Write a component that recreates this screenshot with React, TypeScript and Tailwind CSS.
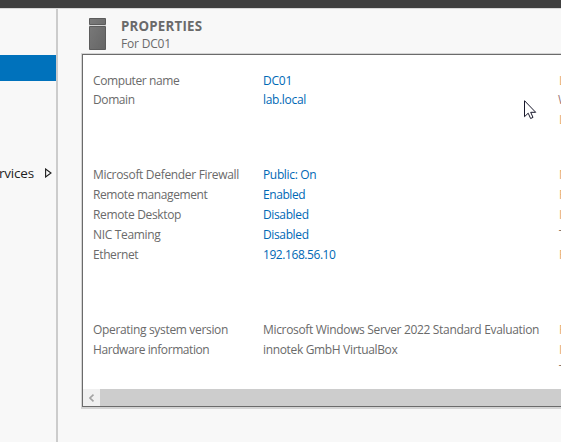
type Row = {
  label: string;
  value: string;
  labelFit: string;
  valueFit: string;
  plain?: boolean;
  more: string;
  moreFit?: string;
};

const identity: Row[] = [
  { label: 'Computer name', value: 'DC01', labelFit: 'tracking-[-0.4px]', valueFit: 'tracking-[-0.2px]', more: 'Last installed updates' },
  { label: 'Domain', value: 'lab.local', labelFit: 'tracking-[-0.4px]', valueFit: 'tracking-[-0.33px]', more: 'Windows Update', moreFit: '-ml-px text-[#9a7a80]' },
  { label: '', value: '', labelFit: '', valueFit: '', more: 'Last checked for updates' },
];

const network: Row[] = [
  { label: 'Microsoft Defender Firewall', value: 'Public: On', labelFit: 'tracking-[-0.32px]', valueFit: 'tracking-[-0.35px]', more: 'Microsoft Defender Antivirus' },
  { label: 'Remote management', value: 'Enabled', labelFit: 'tracking-[-0.4px]', valueFit: 'tracking-[-0.42px]', more: 'Feedback & Diagnostics' },
  { label: 'Remote Desktop', value: 'Disabled', labelFit: 'tracking-[-0.35px]', valueFit: 'tracking-[-0.37px]', more: 'IE Enhanced Security Configuration' },
  { label: 'NIC Teaming', value: 'Disabled', labelFit: 'tracking-[-0.33px]', valueFit: 'tracking-[-0.37px]', more: 'Time zone', moreFit: 'text-[#8c7666]' },
  { label: 'Ethernet', value: '192.168.56.10', labelFit: 'tracking-[-0.4px]', valueFit: 'tracking-[-0.43px]', more: 'Product ID' },
];

const system: Row[] = [
  { label: 'Operating system version', value: 'Microsoft Windows Server 2022 Standard Evaluation', labelFit: 'tracking-[-0.33px]', valueFit: 'tracking-[-0.33px]', plain: true, more: 'Processors' },
  { label: 'Hardware information', value: 'innotek GmbH VirtualBox', labelFit: 'tracking-[-0.42px]', valueFit: 'tracking-[-0.34px]', plain: true, more: 'Installed memory (RAM)' },
  { label: '', value: '', labelFit: '', valueFit: '', more: 'Total disk space', moreFit: 'text-[#8c7666]' },
];

function Rows({ rows }: { rows: Row[] }) {
  return (
    <>
      {rows.map((r) => (
        <div key={r.more} className="flex h-5 text-[12px] leading-5 whitespace-nowrap first:h-[19px] last:h-5">
          <span className={`w-[170px] shrink-0 text-[#6a6a6a] ${r.labelFit}`}>{r.label}</span>
          <span className={`w-[296px] shrink-0 ${r.plain ? 'text-[#6a6a6a]' : 'text-[#0068b5]'} ${r.valueFit}`}>{r.value}</span>
          <span className={`shrink-0 ${r.moreFit ?? 'text-[#dfa970]'}`}>{r.more}</span>
        </div>
      ))}
    </>
  );
}

export default function App() {
  return (
    <div className="relative flex h-[442px] w-[561px] flex-col overflow-hidden bg-[#f8f8f8] font-['Open_Sans','Noto_Sans',sans-serif]">
      <div className="h-[9px] shrink-0 border-b border-[#d8d8d8] bg-[#404040]" />
      <div className="flex min-h-0 flex-1">
        <aside className="w-[58px] shrink-0 overflow-hidden border-r-2 border-[#cccccc] pt-[46px]">
          <div className="h-[26px] bg-[#0072bc]" />
          <div className="mt-[82px] flex h-5 items-center justify-between pr-[4px] text-[13.5px] leading-5 text-[#1e1e1e]">
            <span className="-ml-px tracking-[-0.2px]">rvices</span>
            <svg width="7" height="10" viewBox="0 0 7 10" fill="none" stroke="#1e1e1e" strokeWidth="1.1">
              <path d="M.6 1v8L6 5z" />
            </svg>
          </div>
        </aside>
        <main className="min-w-0 flex-1 pl-[23px] pt-[9px]">
          <header className="flex h-[35px] pl-2">
            <svg width="17" height="32" viewBox="0 0 17 32">
              <defs>
                <linearGradient id="tower" x1="0" y1="0" x2="1" y2="1">
                  <stop stopColor="#7b7b7b" />
                  <stop offset="1" stopColor="#656565" />
                </linearGradient>
              </defs>
              <path d="M.5.5h16v6H.5zM.5 8.5h16v23H.5z" fill="url(#tower)" stroke="#5c5c5c" />
              <path d="M0 7.5h17" stroke="#d4d4d4" />
            </svg>
            <div className="pl-[15px] whitespace-nowrap text-[#6a6a6a]">
              <h1 className="text-[13.3px] leading-[17px] font-bold tracking-[0.2px]">PROPERTIES</h1>
              <p className="text-[12px] leading-[18px] tracking-[-0.2px]">For DC01</p>
            </div>
          </header>
          <section className="border-t border-b-2 border-l border-[#d4d4d4]">
            <div className="h-[353px] overflow-hidden border-y border-l border-[#6b6b6b] bg-white">
              <div className="flex h-[334px] flex-col pt-[16px] pl-[10px]">
                <div>
                  <Rows rows={identity} />
                </div>
                <div className="mt-[35px] *:h-5!">
                  <Rows rows={network} />
                </div>
                <div className="mt-[55px] *:h-5!">
                  <Rows rows={system} />
                </div>
              </div>
              <div className="flex h-[17px] bg-[#cdcdcd]">
                <div className="flex w-[17px] items-center justify-center bg-[#f0f0f0]">
                  <svg width="6" height="8" viewBox="0 0 6 8" fill="none" stroke="#a3a3a3" strokeWidth="1.6">
                    <path d="M4.5 .7L1 4 4.5 7.3" />
                  </svg>
                </div>
              </div>
            </div>
          </section>
        </main>
      </div>
      <svg className="absolute top-[100px] left-[524px]" width="13" height="20" viewBox="0 0 13 20">
        <path d="M.5.7v16l3.7-3.5 2.4 5.3 2.4-1.1-2.3-5.1h5z" fill="#fff" stroke="#17172a" />
      </svg>
    </div>
  );
}
